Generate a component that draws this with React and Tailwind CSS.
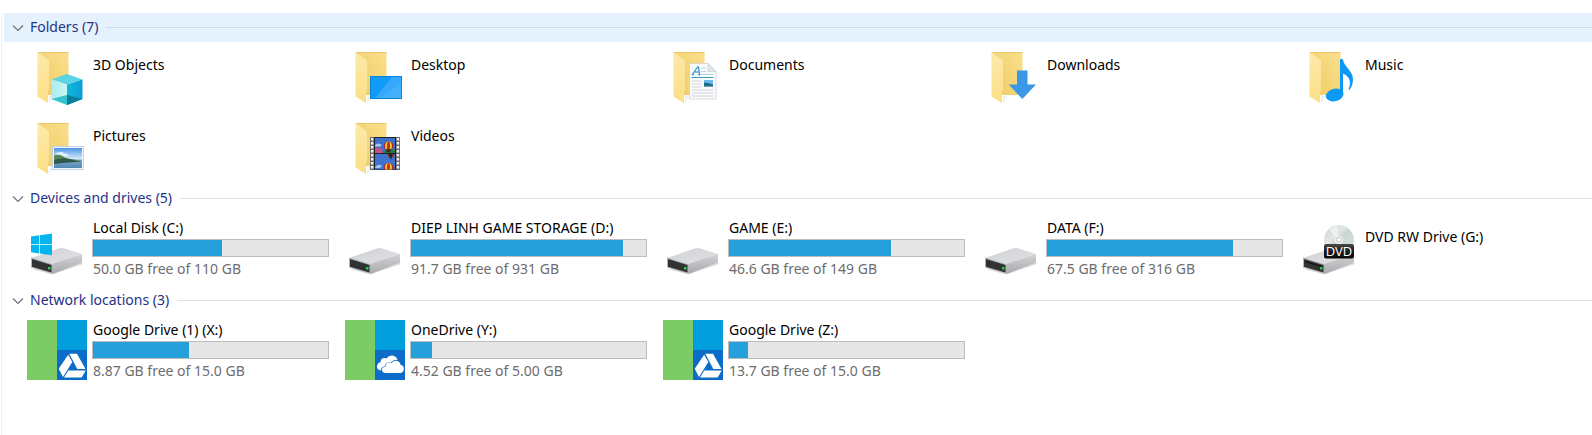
import React, { useState } from "react";

function FolderBase({ children }) {
  return (
    <svg viewBox="0 0 60 60" className="size-[60px] shrink-0" aria-hidden="true">
      <defs>
        <linearGradient id="folderBack" x1="0" y1="1" x2="1" y2="0">
          <stop offset="0" stopColor="#eecb63" />
          <stop offset="1" stopColor="#fadf8c" />
        </linearGradient>
        <linearGradient id="folderFlap" x1="0" y1="0" x2="0" y2="1">
          <stop offset="0" stopColor="#fde9aa" />
          <stop offset="1" stopColor="#fbdf86" />
        </linearGradient>
      </defs>
      <path d="M10.5 5H41.5V48H21z" fill="url(#folderBack)" />
      <path d="M10.5 5H41.5V6H12z" fill="#e9c768" />
      <path d="M22 48.500l4 .5-3 6.500-1 .5z" fill="#f1f1f1" />
      <path d="M10.500 5L22 13.500V43l-1 1.500V56L10.500 49.500z" fill="url(#folderFlap)" />
      {children}
    </svg>
  );
}

function CubeIcon() {
  return (
    <FolderBase>
      <defs>
        <linearGradient id="cubeRight" x1="0" x2="1">
          <stop offset="0" stopColor="#10bcd4" />
          <stop offset="1" stopColor="#0a9bdc" />
        </linearGradient>
        <linearGradient id="cubeLeft" x1="0" x2="1">
          <stop offset="0" stopColor="#a9ebef" />
          <stop offset="1" stopColor="#cdf5f5" />
        </linearGradient>
      </defs>
      <path d="M24.500 32.500L40 27l15.500 5.500L40 37.500z" fill="#5ad3e2" />
      <path d="M24.500 32.500L40 37.500V58l-15.500-6z" fill="url(#cubeLeft)" />
      <path d="M55.500 32.500L40 37.500V58l15.500-6z" fill="url(#cubeRight)" />
      <path d="M24.500 52L40 48v10z" fill="#35c3cf" />
      <path d="M55.500 52L40 48v10z" fill="#087f9d" />
    </FolderBase>
  );
}

function DesktopIcon() {
  return (
    <FolderBase>
      <rect x="25" y="29" width="32" height="23" fill="#0b84d8" />
      <rect x="26" y="30" width="30" height="21" fill="#109bfa" />
      <path d="M56 30v21H30L47 30z" fill="#35aafc" />
      <path d="M56 36v15H36z" fill="#4db4fb" opacity=".6" />
    </FolderBase>
  );
}

function DocumentIcon() {
  return (
    <FolderBase>
      <path d="M26.500 16.500H45l8 8V52H26.500z" fill="#f9fafc" stroke="#cfd1d6" strokeWidth=".8" />
      <path d="M45 16.500V24.500h8z" fill="#e3e5ea" stroke="#c3c6cc" strokeWidth=".6" />
      <path d="M29.500 27.500l5-7.500h1l1 7.500M31.500 25h4.500M28.800 27.700h2M35 27.700h2.500" fill="none" stroke="#2188bd" strokeWidth="1.100" />
      <path d="M38 21h5M38 24.500h5M38 27.500h12" stroke="#a9c9dc" strokeWidth=".8" />
      <path d="M28.500 30.500h22" stroke="#3c9cc4" strokeWidth="1" />
      <path d="M28.500 34h10M28.500 37h10M28.500 40h10M28.500 43h22M28.500 46h22M28.500 49h22" stroke="#c9cbd2" strokeWidth=".8" />
      <rect x="41" y="33" width="9" height="6.500" fill="#6bb7e8" />
      <path d="M41 35.500q4 0 9 2v2h-9z" fill="#226d8c" />
    </FolderBase>
  );
}

function DownloadIcon() {
  return (
    <FolderBase>
      <path d="M36 23.500h10.500V37.500H55L41.300 52 27.700 37.500H36z" fill="#3b97e8" />
    </FolderBase>
  );
}

function MusicIcon() {
  return (
    <FolderBase>
      <ellipse cx="35.700" cy="48" rx="9" ry="6.300" fill="#0b99f5" transform="rotate(-14 35.700 48)" />
      <path d="M41 12.500q1.500-1.500 3 0c.5 7 10 11 10 20 0 4-1.500 8-3.500 10.500l-1-.5c2.500-6 2.500-12.500-5.500-16V48H41z" fill="#0b99f5" />
    </FolderBase>
  );
}

function PictureIcon() {
  return (
    <FolderBase>
      <defs>
        <linearGradient id="sky" x1="0" y1="0" x2="0" y2="1">
          <stop offset="0" stopColor="#4d94e5" />
          <stop offset=".55" stopColor="#d5eafa" />
          <stop offset=".6" stopColor="#7ba9c9" />
          <stop offset="1" stopColor="#5386b4" />
        </linearGradient>
      </defs>
      <rect x="25.500" y="28.500" width="31" height="23" fill="#f2f6fb" stroke="#b8cbe2" strokeWidth=".8" />
      <rect x="27" y="30" width="28" height="20" fill="url(#sky)" />
      <path d="M28 36q5-4 9-1l6 2-6 2z" fill="#eff7fd" opacity=".8" />
      <path d="M27 37.500c5-2 8 0 12 2.500 6 2 10 1 16 3.500H27z" fill="#5d8656" />
      <path d="M27 42q8-3 15-1t13 2.500l-19 1.500-9 1z" fill="#2f594b" />
    </FolderBase>
  );
}

function Balloon({ x, y }) {
  return (
    <g>
      <ellipse cx={x} cy={y} rx="4.800" ry="4.600" fill="#b3261f" />
      <ellipse cx={x} cy={y} rx="3.400" ry="4.600" fill="#f2cf32" />
      <ellipse cx={x} cy={y} rx="1.600" ry="4.600" fill="#c2302a" />
      <path d={`M${x - 3} ${y + 3.200}h6l-2 3h-2z`} fill="#34241c" />
    </g>
  );
}

function VideoIcon() {
  return (
    <FolderBase>
      <defs>
        <clipPath id="filmTop"><rect x="30" y="20" width="20" height="15" /></clipPath>
        <clipPath id="filmBottom"><rect x="30" y="36" width="20" height="15.500" /></clipPath>
      </defs>
      <rect x="25" y="19" width="30" height="33" fill="#6b6b70" />
      <rect x="29" y="19" width="22" height="33" fill="#1e2023" />
      <path d="M27.200 20v31.500M52.900 20v31.500" stroke="#f0f0f0" strokeWidth="2.400" strokeDasharray="2.600 1.400" />
      <rect x="30" y="20" width="20" height="15" fill="#3c70cd" />
      <rect x="30" y="36" width="20" height="15.500" fill="#3f74ce" />
      <g clipPath="url(#filmTop)">
        <path d="M30 27q3-3 7 0l-2 1.500h-5z" fill="#a9c9ee" />
        <path d="M30 31l2-2 2 2 2-2 2 6h-8z" fill="#d0507f" />
        <path d="M38 34q5-4 12-2v4H38z" fill="#257b3a" />
        <Balloon x={43.500} y={28} />
      </g>
      <g clipPath="url(#filmBottom)">
        <path d="M42 36h8l-3 4h-3z" fill="#8c3429" />
        <path d="M43.500 36h4l-1.500 6z" fill="#242424" />
        <path d="M30 49q4-4 7-1l-2 2h-5z" fill="#a0c6f0" />
        <Balloon x={43.500} y={49.500} />
      </g>
    </FolderBase>
  );
}

function DriveBody() {
  return (
    <>
      <defs>
        <linearGradient id="driveTop" x1="0" y1="0" x2="1" y2="1">
          <stop offset="0" stopColor="#cfd0d3" />
          <stop offset="1" stopColor="#e2e3e6" />
        </linearGradient>
        <linearGradient id="driveSide" x1="0" y1="0" x2="0" y2="1">
          <stop offset="0" stopColor="#d3d3d6" />
          <stop offset="1" stopColor="#a9aaad" />
        </linearGradient>
      </defs>
      <path d="M5 51l20 5.500L56 46l-2-3z" fill="#dcdcdc" />
      <path d="M4 40L32.500 30.300q2-.6 4 0L55 36 26 46z" fill="url(#driveTop)" />
      <path d="M55 36v8.500L27 55.500q-2 .5-2-1V47q0-1 1.500-1.500z" fill="url(#driveSide)" />
      <path d="M4 39.500L25.500 46v9.800L4 49.500z" fill="#b3b4b6" />
      <path d="M5 41l19.500 6v7.500L5 48.800z" fill="#303331" />
      <rect x="21" y="49" width="2.500" height="2.500" fill="#36c35c" />
    </>
  );
}

function DriveIcon() {
  return (
    <svg viewBox="0 0 60 60" className="size-[60px] shrink-0" aria-hidden="true">
      <DriveBody />
    </svg>
  );
}

function SystemDriveIcon() {
  return (
    <svg viewBox="0 0 60 60" className="size-[60px] shrink-0" aria-hidden="true">
      <DriveBody />
      <path d="M4 18.500l8-1.200V26H4zM12.700 17.200L25 15.500V26H12.700zM4 26.700h8v8.800l-8-1.200zM12.700 26.700H25V37.200l-12.300-1.600z" fill="#06b5ee" />
    </svg>
  );
}

function DvdIcon() {
  return (
    <svg viewBox="0 0 60 60" className="size-[60px] shrink-0" aria-hidden="true">
      <DriveBody />
      <path d="M6 43.500l17 5.200" stroke="#0c0d0c" strokeWidth="1" />
      <defs>
        <linearGradient id="disc" x1="0" y1="0" x2="1" y2="1">
          <stop offset="0" stopColor="#c9cdcd" />
          <stop offset=".35" stopColor="#e3e8e7" />
          <stop offset=".5" stopColor="#c9d6d2" />
          <stop offset="1" stopColor="#dfe2e3" />
        </linearGradient>
        <linearGradient id="badge" x1="0" y1="0" x2="0" y2="1">
          <stop offset="0" stopColor="#4a4a4a" />
          <stop offset=".5" stopColor="#1b1b1b" />
          <stop offset="1" stopColor="#080808" />
        </linearGradient>
      </defs>
      <circle cx="40" cy="22" r="15" fill="url(#disc)" />
      <path d="M40 22L30 12q4-4 8-5z" fill="#f4f6f6" opacity=".7" />
      <circle cx="40" cy="22" r="3.800" fill="#d0d4d4" stroke="#f7f7f7" />
      <circle cx="40" cy="22" r="1.800" fill="#fff" />
      <rect x="25" y="26" width="30" height="14.500" rx="2" fill="url(#badge)" />
      <text x="40" y="38" textAnchor="middle" fontSize="13" fill="#fff" fontFamily="Open Sans, sans-serif">DVD</text>
    </svg>
  );
}

function NetworkTile({ children }) {
  return (
    <svg viewBox="0 0 60 60" className="size-[60px] shrink-0" aria-hidden="true">
      <path d="M0 0h30v60H0z" fill="#7dcb64" />
      <path d="M30 0h30v30H30z" fill="#029edb" />
      <path d="M30 30h30v30H30z" fill="#0c6cc7" />
      {children}
    </svg>
  );
}

function GoogleDriveIcon() {
  return (
    <NetworkTile>
      <path d="M42.300 33.700h7.700L58.500 49H50.300zM41.200 34.800L45.300 42 36 57 31.700 48.800zM41.300 50.500H58.700L54.700 57.500H37z" fill="#fff" />
    </NetworkTile>
  );
}

function OneDriveIcon() {
  return (
    <NetworkTile>
      <path d="M36 50.500q-4-.5-4-4 0-3.500 3.500-4.200 0-4 4-4.200 1-.1 2 .4 2-3 5.500-3 4.500.3 5.500 4.500-4-.8-6.500 2.500-5-1-6.300 3.800-3.700.6-3.700 4.200z" fill="#fff" />
      <path d="M40 53q-3-.5-3-3.200 0-2.700 3.500-3.200.2-4 4-4.100 1.200 0 2.200.6 1.800-2.600 4.800-2.300 3.500.4 4 4 3.300.5 3.300 4 0 3.700-3.300 4.200z" fill="#fff" />
    </NetworkTile>
  );
}

const folders = [
  { name: "3D Objects", Icon: CubeIcon },
  { name: "Desktop", Icon: DesktopIcon },
  { name: "Documents", Icon: DocumentIcon },
  { name: "Downloads", Icon: DownloadIcon },
  { name: "Music", Icon: MusicIcon },
  { name: "Pictures", Icon: PictureIcon },
  { name: "Videos", Icon: VideoIcon },
];

const drives = [
  { name: "Local Disk (C:)", Icon: SystemDriveIcon, used: 55, space: "50.0 GB free of 110 GB" },
  { name: "DIEP LINH GAME STORAGE (D:)", Icon: DriveIcon, used: 90, space: "91.7 GB free of 931 GB" },
  { name: "GAME (E:)", Icon: DriveIcon, used: 69, space: "46.6 GB free of 149 GB" },
  { name: "DATA (F:)", Icon: DriveIcon, used: 79, space: "67.5 GB free of 316 GB" },
  { name: "DVD RW Drive (G:)", Icon: DvdIcon },
];

const locations = [
  { name: "Google Drive (1) (X:)", Icon: GoogleDriveIcon, used: 41, space: "8.87 GB free of 15.0 GB" },
  { name: "OneDrive (Y:)", Icon: OneDriveIcon, used: 9, space: "4.52 GB free of 5.00 GB" },
  { name: "Google Drive (Z:)", Icon: GoogleDriveIcon, used: 8, space: "13.7 GB free of 15.0 GB" },
];

function Section({ title, active, children }) {
  const [open, setOpen] = useState(true);
  return (
    <section>
      <h2 className={active ? "ml-0.5 bg-[#e5f2fd]" : "ml-0.5"}>
        <button
          type="button"
          aria-expanded={open}
          onClick={() => setOpen(!open)}
          className="flex h-[29px] w-full items-center pl-2 text-[#1e3287]"
        >
          <svg viewBox="0 0 12 8" className="h-2 w-3 shrink-0" aria-hidden="true">
            <path d="M1 1.500l5 5 5-5" fill="none" stroke="#6f7278" strokeWidth="1.200" />
          </svg>
          <span className="ml-1.5 whitespace-nowrap pb-0.5">{title}</span>
          <span className={active ? "ml-2 h-px grow bg-[#c9dbe9]" : "ml-2 h-px grow bg-[#e0e2e5]"} />
        </button>
      </h2>
      {open && <ul className="grid grid-cols-5">{children}</ul>}
    </section>
  );
}

function Folder({ name, Icon }) {
  return (
    <li className="h-[71px] pl-[25px] pt-[5px]">
      <a href="#" className="flex gap-1.5">
        <Icon />
        <span className="pt-2">{name}</span>
      </a>
    </li>
  );
}

function Drive({ name, Icon, used, space }) {
  return (
    <li className="h-[73px] pl-[25px] pt-[5px]">
      <a href="#" className="flex gap-[5px]">
        <Icon />
        {space ? (
          <span className="flex shrink-0 flex-col gap-px">
            <span className="whitespace-nowrap pl-px">{name}</span>
            <span
              role="progressbar"
              aria-label={name}
              aria-valuenow={used}
              aria-valuemin={0}
              aria-valuemax={100}
              className="block h-[18px] w-[237px] border border-[#bcbcbc] bg-[#e6e6e6]"
            >
              <span className="block h-full bg-[#26a0da]" style={{ width: `${used}%` }} />
            </span>
            <span className="whitespace-nowrap pl-px pt-px text-[#6d6d6d]">{space}</span>
          </span>
        ) : (
          <span className="whitespace-nowrap pl-px pt-[9px]">{name}</span>
        )}
      </a>
    </li>
  );
}

export default function App() {
  return (
    <main className="min-h-screen overflow-x-hidden bg-white pl-px pt-[13px] font-['Noto_Sans','Open_Sans',sans-serif] text-sm leading-5 text-black">
      <div className="min-h-[422px] border-l border-[#f0f0f0]">
        <Section title="Folders (7)" active>
          {folders.map((item) => <Folder key={item.name} {...item} />)}
        </Section>
        <Section title="Devices and drives (5)">
          {drives.map((item) => <Drive key={item.name} {...item} />)}
        </Section>
        <Section title="Network locations (3)">
          {locations.map((item) => <Drive key={item.name} {...item} />)}
        </Section>
      </div>
    </main>
  );
}
